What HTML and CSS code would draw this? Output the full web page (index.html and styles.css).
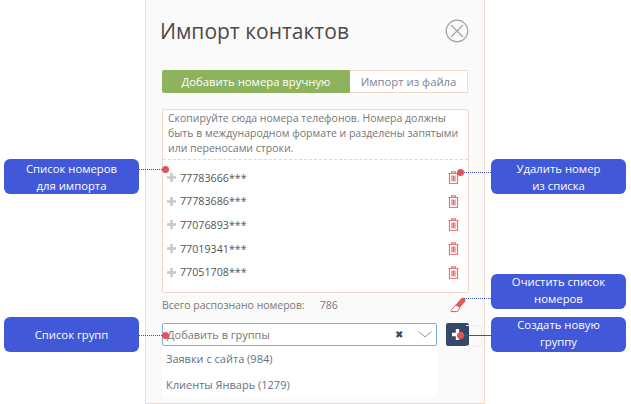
FILE: index.html
```html
<!DOCTYPE html>
<html lang="en">
<head>
    <meta charset="UTF-8">
    <title>Импорт контактов</title>
    <link rel="stylesheet" href="styles.css">
</head>
<body>
    <div class="modal">
        <div class="modal-head">
            <h1>Импорт контактов</h1>
            <svg class="close" width="24" height="24" viewBox="0 0 24 24">
                <circle cx="12" cy="12" r="10.8"/>
                <path d="M6 6L18 18M18 6L6 18"/>
            </svg>
        </div>

        <div class="tabs">
            <div class="tab active">Добавить номера вручную</div>
            <div class="tab">Импорт из файла</div>
        </div>

        <div class="numbers">
            <p class="hint">Скопируйте сюда номера телефонов. Номера должны быть в международном формате и разделены запятыми или переносами строки.</p>
            <ul class="list">
                <li><svg class="plus" width="9" height="9" viewBox="0 0 9 9"><path d="M4.5 0V9M0 4.5H9"/></svg><span class="num">77783666***</span><svg class="trash" width="11" height="13" viewBox="0 0 11 13"><path d="M.5 2.5h10M3.5 2.5V.8h4v1.7M1.5 2.5v10h8v-10M4 4.5v6M5.5 4.5v6M7 4.5v6"/></svg></li>
                <li><svg class="plus" width="9" height="9" viewBox="0 0 9 9"><path d="M4.5 0V9M0 4.5H9"/></svg><span class="num">77783686***</span><svg class="trash" width="11" height="13" viewBox="0 0 11 13"><path d="M.5 2.5h10M3.5 2.5V.8h4v1.7M1.5 2.5v10h8v-10M4 4.5v6M5.5 4.5v6M7 4.5v6"/></svg></li>
                <li><svg class="plus" width="9" height="9" viewBox="0 0 9 9"><path d="M4.5 0V9M0 4.5H9"/></svg><span class="num">77076893***</span><svg class="trash" width="11" height="13" viewBox="0 0 11 13"><path d="M.5 2.5h10M3.5 2.5V.8h4v1.7M1.5 2.5v10h8v-10M4 4.5v6M5.5 4.5v6M7 4.5v6"/></svg></li>
                <li><svg class="plus" width="9" height="9" viewBox="0 0 9 9"><path d="M4.5 0V9M0 4.5H9"/></svg><span class="num">77019341***</span><svg class="trash" width="11" height="13" viewBox="0 0 11 13"><path d="M.5 2.5h10M3.5 2.5V.8h4v1.7M1.5 2.5v10h8v-10M4 4.5v6M5.5 4.5v6M7 4.5v6"/></svg></li>
                <li><svg class="plus" width="9" height="9" viewBox="0 0 9 9"><path d="M4.5 0V9M0 4.5H9"/></svg><span class="num">77051708***</span><svg class="trash" width="11" height="13" viewBox="0 0 11 13"><path d="M.5 2.5h10M3.5 2.5V.8h4v1.7M1.5 2.5v10h8v-10M4 4.5v6M5.5 4.5v6M7 4.5v6"/></svg></li>
            </ul>
        </div>

        <div class="total">
            <span>Всего распознано номеров:</span>
            <span class="count">786</span>
            <svg class="eraser" width="16" height="16" viewBox="0 0 16 16">
                <path class="eraser-top" d="M5.5 8L11 1.6C12 .6 14 .6 15 1.8C15.8 2.8 15.6 4.2 14.8 5L10 10.6Z"/>
                <path class="eraser-low" d="M5.5 8L10 10.6L7.6 14.6H1L1 13.6Z"/>
            </svg>
        </div>

        <div class="group-row">
            <div class="select">
                <span class="select-text">Добавить в группы</span>
                <span class="select-clear">✖</span>
                <svg class="chevron" width="14" height="7" viewBox="0 0 14 7"><path d="M.5 .5L7 6L13.5 .5"/></svg>
            </div>
            <div class="add-btn">
                <svg width="11" height="11" viewBox="0 0 11 11"><path d="M5.5 0V11M0 5.5H11"/></svg>
            </div>
        </div>

        <div class="options">
            <div class="option">Заявки с сайта (984)</div>
            <div class="option">Клиенты Январь (1279)</div>
        </div>
    </div>

    <svg class="bubble" width="16" height="28" viewBox="0 0 16 28">
        <path d="M0 .5H15.5V21H7L3 27V21H0"/>
    </svg>

    <div class="note note-list">Список номеров<br>для импорта</div>
    <div class="note note-groups">Список групп</div>
    <div class="note note-delete">Удалить номер<br>из списка</div>
    <div class="note note-clear">Очистить список<br>номеров</div>
    <div class="note note-create">Создать новую<br>группу</div>

    <div class="leader leader-list"></div>
    <div class="leader leader-groups"></div>
    <div class="leader leader-delete"></div>
    <div class="leader leader-clear"></div>
    <div class="leader leader-create"></div>
</body>
</html>
```

FILE: styles.css
```css
* {
    margin: 0;
    padding: 0;
    box-sizing: border-box;
    font-family: 'Open Sans', sans-serif;
}

body {
    position: relative;
    width: 631px;
    height: 404px;
    background: #fff;
    overflow: hidden;
}

.modal {
    width: 340px;
    height: 404px;
    margin-left: 145px;
    padding: 0 15px 0 16px;
    background: #fbfafa;
    border: 1px solid #eed9cb;
    border-top: none;
}

.modal-head {
    display: flex;
    align-items: center;
    justify-content: space-between;
    height: 60px;
    padding: 2px 0 0;
}

.modal-head h1 {
    font-size: 21px;
    font-weight: 400;
    color: #4a4a4a;
    margin-left: -2px;
}

.close {
    fill: none;
    stroke: #a3a3a3;
    stroke-width: 1.2;
}

.tabs {
    display: flex;
    height: 23px;
    margin-top: 10px;
    font-size: 11.3px;
}

.tab {
    display: flex;
    align-items: center;
    justify-content: center;
    width: 118px;
    background: #fff;
    color: #7b8496;
    border: 1px solid #eed9cb;
    border-left: none;
    border-radius: 0 2px 2px 0;
}

.tab.active {
    width: 188px;
    background: #8db35c;
    color: #fff;
    border: none;
    border-radius: 2px 0 0 2px;
}

.numbers {
    height: 184px;
    margin-top: 16px;
    background: #fff;
    border: 1px solid #eed9cb;
    border-radius: 2px;
}

.hint {
    height: 50px;
    padding: 1px 5px 0;
    font-size: 10.5px;
    line-height: 15px;
    color: #777;
    border-bottom: 1px dashed #e5d5ca;
}

.list {
    list-style: none;
    padding-top: 6px;
}

.list li {
    display: flex;
    align-items: center;
    height: 23.6px;
    padding: 0 9px 0 4px;
}

.plus {
    margin-right: 4px;
    fill: none;
    stroke: #c9c9c9;
    stroke-width: 2.6;
}

.num {
    flex: 1;
    font-size: 10.7px;
    color: #555;
}

.trash {
    fill: none;
    stroke: #e07878;
    stroke-width: 1.2;
}

.total {
    display: flex;
    align-items: center;
    height: 23px;
    font-size: 10.5px;
    color: #777;
}

.count {
    flex: 1;
    margin-left: 15px;
}

.eraser {
    margin-right: 3px;
}

.eraser-top {
    fill: #e05a5a;
}

.eraser-low {
    fill: #fff;
    stroke: #e05a5a;
    stroke-width: 1;
}

.group-row {
    display: flex;
    gap: 9px;
    margin-top: 7px;
}

.select {
    display: flex;
    align-items: center;
    width: 275px;
    height: 23px;
    padding: 0 4px 0 4px;
    background: #fff;
    border: 1px solid #7fb0c8;
    border-radius: 2px;
}

.select-text {
    flex: 1;
    font-size: 11px;
    color: #777;
}

.select-clear {
    margin-right: 15px;
    font-size: 9.5px;
    color: #34496a;
}

.chevron {
    fill: none;
    stroke: #8a94a3;
    stroke-width: 1;
}

.add-btn {
    display: flex;
    align-items: center;
    justify-content: center;
    width: 23px;
    height: 23px;
    background: #34496a;
    border-radius: 2px;
}

.add-btn svg {
    fill: none;
    stroke: #fff;
    stroke-width: 3.4;
}

.options {
    width: 275px;
    height: 51px;
    background: #fff;
}

.option {
    height: 26px;
    padding: 0 4px;
    font-size: 11px;
    line-height: 25px;
    color: #64708a;
}

/* faint watermark behind the plus button */
.bubble {
    position: absolute;
    left: 466px;
    top: 325px;
    fill: none;
    stroke: #eeeeee;
    stroke-width: 1;
}

.note {
    position: absolute;
    display: flex;
    align-items: center;
    justify-content: center;
    width: 135px;
    height: 35px;
    background: #4158d8;
    border-radius: 6px;
    color: #fff;
    font-size: 11.3px;
    line-height: 17px;
    text-align: center;
}

.note-list { left: 4px; top: 159px; }
.note-groups { left: 4px; top: 317px; }
.note-delete { left: 491px; top: 159px; }
.note-clear { left: 491px; top: 274px; padding-bottom: 4px; }
.note-create { left: 491px; top: 317px; padding-bottom: 4px; }

.leader {
    position: absolute;
    height: 0;
    border-top: 1px dotted #3f4fa8;
}

.leader::after {
    content: '';
    position: absolute;
    top: -4px;
    width: 7px;
    height: 7px;
    background: #e05555;
    border-radius: 50%;
}

.leader-list { left: 139px; top: 169px; width: 27px; }
.leader-list::after { right: -3px; }

.leader-groups { left: 139px; top: 335px; width: 27px; }
.leader-groups::after { right: -3px; }

.leader-delete { left: 460px; top: 172px; width: 31px; }
.leader-delete::after { left: -3px; }

.leader-clear { left: 464px; top: 298px; width: 27px; }
.leader-clear::after { display: none; }

.leader-create { left: 460px; top: 335px; width: 31px; border-top-style: solid; }
.leader-create::after { left: -3px; }
```
